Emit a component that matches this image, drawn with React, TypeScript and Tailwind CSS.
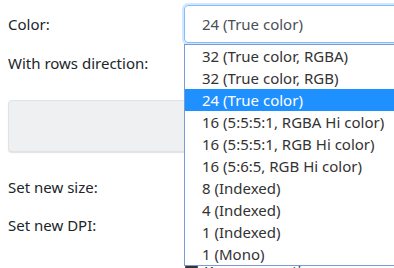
import React from "react";

/* ---------------------------
   Datos
--------------------------- */
const COLOR_OPTIONS = [
    "32 (True color, RGBA)",
    "32 (True color, RGB)",
    "24 (True color)",
    "16 (5:5:5:1, RGBA Hi color)",
    "16 (5:5:5:1, RGB Hi color)",
    "16 (5:6:5, RGB Hi color)",
    "8 (Indexed)",
    "4 (Indexed)",
    "1 (Indexed)",
    "1 (Mono)",
];

const SELECTED = 2;

function Label({ children }: { children: React.ReactNode }) {
    return <span className="text-[15px] text-[#212529]">{children}</span>;
}

/* ---------------------------
   COMPONENT
--------------------------- */
export default function App() {
    return (
        <div
            className="relative w-[394px] h-[268px] overflow-hidden bg-white"
            style={{ fontFamily: '"Segoe UI", "Noto Sans", "Liberation Sans", sans-serif' }}
        >
            <div className="flex flex-col pl-2">
                {/* Color */}
                <div className="flex items-center h-[38px] mt-[5px]">
                    <div className="w-[176px]">
                        <Label>Color:</Label>
                    </div>
                    <div className="flex-1 h-[38px] flex items-center pl-[17px] border border-[#80bdff] rounded-l-[4px] shadow-[0_0_0_2px_rgba(0,123,255,0.18)] -mr-4">
                        <span className="text-[15px] text-[#495057]">24 (True color)</span>
                    </div>
                </div>

                {/* Rows direction */}
                <div className="flex items-center h-[38px] mt-[1px]">
                    <Label>With rows direction:</Label>
                </div>

                {/* Panel */}
                <div className="mt-[18px] h-[52px] w-[400px] bg-[#eff0f2] border border-[#dfe2e6] rounded-[4px] shadow-[0_1px_1px_rgba(0,0,0,0.12)]" />

                {/* Size */}
                <div className="flex items-center h-[38px] mt-[16px]">
                    <Label>Set new size:</Label>
                </div>

                {/* DPI */}
                <div className="flex items-center h-[38px]">
                    <Label>Set new DPI:</Label>
                </div>

                {/* Keep proportion (tapado por el desplegable) */}
                <div className="flex items-start gap-[6px] h-[20px] mt-[20px] pl-[177px]">
                    <span className="mt-[1px] w-[13px] h-[13px] border border-[#555] bg-[#333]" />
                    <span className="text-[15px] leading-[15px] text-[#212529]">Keep proportion</span>
                </div>
            </div>

            {/* Dropdown abierto */}
            <ul className="absolute left-[184px] top-[44px] w-[230px] border border-[#7a9bd2] bg-white py-0">
                {COLOR_OPTIONS.map((opt, i) => (
                    <li
                        key={opt}
                        className={
                            i === SELECTED
                                ? "h-[22px] flex items-center pl-[17px] bg-[#1e90ff] text-white text-[15px]"
                                : "h-[22px] flex items-center pl-[17px] text-[#333] text-[15px]"
                        }
                    >
                        {opt}
                    </li>
                ))}
            </ul>
        </div>
    );
}
